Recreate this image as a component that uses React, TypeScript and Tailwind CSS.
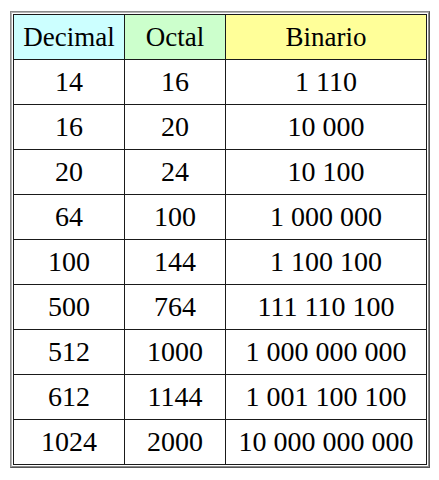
import React from "react";

const rows: [string, string, string][] = [
  ["14", "16", "1 110"],
  ["16", "20", "10 000"],
  ["20", "24", "10 100"],
  ["64", "100", "1 000 000"],
  ["100", "144", "1 100 100"],
  ["500", "764", "111 110 100"],
  ["512", "1000", "1 000 000 000"],
  ["612", "1144", "1 001 100 100"],
  ["1024", "2000", "10 000 000 000"],
];

const base = "flex items-center justify-center font-['Liberation_Serif','Times_New_Roman',serif] leading-none text-black";
const head = `${base} text-[27px]`;
const cell = `${base} text-[28px] bg-white`;

export default function App() {
  return (
    <div className="w-[439px] h-[480px] bg-white pl-[10px] pt-[11px]">
      <div className="w-[420px] border border-t-[#8a8a8a] border-l-[#8a8a8a] border-b-[#555555] border-r-[#555555]">
        <div className="border border-t-[#b5b5b5] border-l-[#b5b5b5] border-b-[#8a8a8a] border-r-[#8a8a8a] bg-white p-px">
          <div className="grid grid-cols-[110px_100px_200px] grid-rows-10 h-[451px] gap-px bg-[#1a1a1a] p-px">
            <div className={`bg-[#ccffff] ${head}`}>Decimal</div>
            <div className={`bg-[#ccffcc] ${head}`}>Octal</div>
            <div className={`bg-[#ffff99] ${head}`}>Binario</div>
            {rows.map((r, i) => (
              <React.Fragment key={i}>
                <div className={cell}>{r[0]}</div>
                <div className={cell}>{r[1]}</div>
                <div className={cell}>{r[2]}</div>
              </React.Fragment>
            ))}
          </div>
        </div>
      </div>
    </div>
  );
}
